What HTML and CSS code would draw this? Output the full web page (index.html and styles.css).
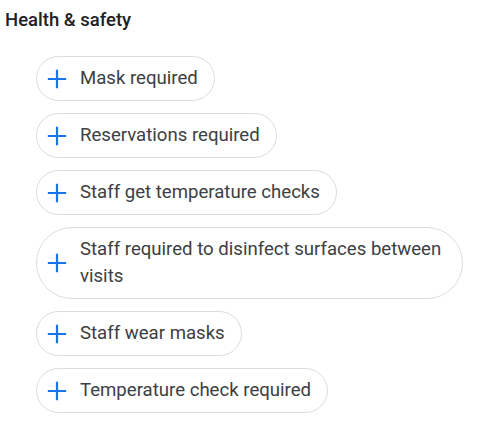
FILE: index.html
```html
<!DOCTYPE html>
<html lang="en">
<head>
  <meta charset="UTF-8" />
  <meta name="viewport" content="width=device-width, initial-scale=1.0" />
  <title>Health &amp; safety</title>
  <link rel="stylesheet" href="styles.css">
</head>
<body>
  <section class="attrs">
    <h2>Health &amp; safety</h2>
    <div class="chips">
      <button class="chip"><svg class="plus" viewBox="0 0 24 24"><path d="M12 2v20M2 12h20"/></svg><span>Mask required</span></button>
      <button class="chip"><svg class="plus" viewBox="0 0 24 24"><path d="M12 2v20M2 12h20"/></svg><span>Reservations required</span></button>
      <button class="chip"><svg class="plus" viewBox="0 0 24 24"><path d="M12 2v20M2 12h20"/></svg><span>Staff get temperature checks</span></button>
      <button class="chip"><svg class="plus" viewBox="0 0 24 24"><path d="M12 2v20M2 12h20"/></svg><span>Staff required to disinfect surfaces between visits</span></button>
      <button class="chip"><svg class="plus" viewBox="0 0 24 24"><path d="M12 2v20M2 12h20"/></svg><span>Staff wear masks</span></button>
      <button class="chip"><svg class="plus" viewBox="0 0 24 24"><path d="M12 2v20M2 12h20"/></svg><span>Temperature check required</span></button>
    </div>
  </section>
</body>
</html>
```

FILE: styles.css
```css
*{box-sizing:border-box;font-family:Roboto,Arial,sans-serif}
body{margin:0;background:#fff;color:#3c4043}
.attrs{padding:8px 17px 20px 5px}
.attrs h2{margin:0;font-size:18.5px;font-weight:500;line-height:24px;color:#202124}
.chips{
  display:flex;flex-direction:column;align-items:flex-start;
  gap:12px;margin:24px 0 0 31px;
}
.chip{
  display:flex;align-items:center;gap:12px;
  min-height:45px;padding:8px 16px 8px 9px;
  background:#fff;border:1px solid #dadce0;border-radius:9999px;
  font-size:18.6px;line-height:27px;color:#3c4043;text-align:left;
}
.plus{flex:none;width:22px;height:22px;fill:none;stroke:#1a73e8;stroke-width:2.4}
```
